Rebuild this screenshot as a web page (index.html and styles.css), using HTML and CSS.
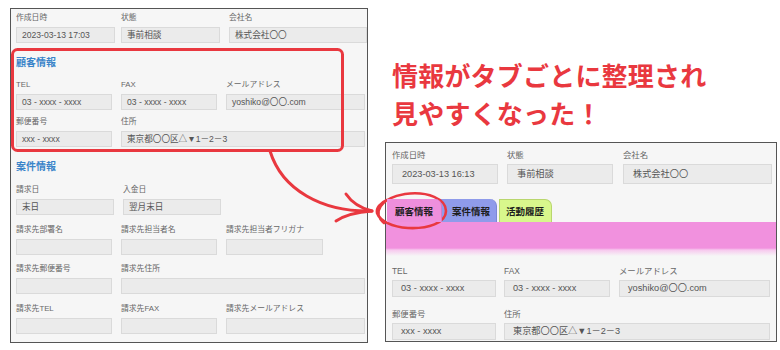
FILE: index.html
```html
<!DOCTYPE html>
<html lang="ja">
<head>
<meta charset="utf-8">
<title>タブ整理</title>
<link rel="stylesheet" href="styles.css">
</head>
<body>
<div class="page">
  <div class="panel panel-old">
    <div class="row row-top">
      <div class="field w99"><div class="lbl">作成日時</div><div class="inp">2023-03-13 17:03</div></div>
      <div class="field w99"><div class="lbl">状態</div><div class="inp">事前相談</div></div>
      <div class="field grow ml3"><div class="lbl">会社名</div><div class="inp">株式会社〇〇</div></div>
    </div>

    <div class="sec sec-first">顧客情報</div>
    <div class="row">
      <div class="field w96"><div class="lbl">TEL</div><div class="inp">03 - xxxx - xxxx</div></div>
      <div class="field w96"><div class="lbl">FAX</div><div class="inp">03 - xxxx - xxxx</div></div>
      <div class="field grow"><div class="lbl">メールアドレス</div><div class="inp">yoshiko@〇〇.com</div></div>
    </div>
    <div class="row gap6">
      <div class="field w96"><div class="lbl">郵便番号</div><div class="inp">xxx - xxxx</div></div>
      <div class="field grow"><div class="lbl">住所</div><div class="inp">東京都〇〇区△▼1－2－3</div></div>
    </div>

    <div class="sec sec-second">案件情報</div>
    <div class="row">
      <div class="field w98"><div class="lbl">請求日</div><div class="inp">末日</div></div>
      <div class="field w98"><div class="lbl">入金日</div><div class="inp">翌月末日</div></div>
    </div>
    <div class="row gap9">
      <div class="field w96"><div class="lbl">請求先部署名</div><div class="inp"></div></div>
      <div class="field w96"><div class="lbl">請求先担当者名</div><div class="inp"></div></div>
      <div class="field w97"><div class="lbl">請求先担当者フリガナ</div><div class="inp"></div></div>
    </div>
    <div class="row gap8">
      <div class="field w96"><div class="lbl">請求先郵便番号</div><div class="inp"></div></div>
      <div class="field grow"><div class="lbl">請求先住所</div><div class="inp"></div></div>
    </div>
    <div class="row gap9">
      <div class="field w96"><div class="lbl">請求先TEL</div><div class="inp"></div></div>
      <div class="field w96"><div class="lbl">請求先FAX</div><div class="inp"></div></div>
      <div class="field grow"><div class="lbl">請求先メールアドレス</div><div class="inp"></div></div>
    </div>
  </div>

  <div class="right">
    <p class="headline">情報がタブごとに整理され<br>見やすくなった！</p>
    <div class="panel panel-new">
      <div class="nrow nrow-top">
        <div class="nfield w106"><div class="nlbl">作成日時</div><div class="ninp tall">2023-03-13 16:13</div></div>
        <div class="nfield w106"><div class="nlbl">状態</div><div class="ninp tall">事前相談</div></div>
        <div class="nfield grow ml1"><div class="nlbl">会社名</div><div class="ninp tall">株式会社〇〇</div></div>
      </div>
      <div class="tabs">
        <div class="tab tab-pink">顧客情報</div>
        <div class="tab tab-blue">案件情報</div>
        <div class="tab tab-green">活動履歴</div>
      </div>
      <div class="band"></div>
      <div class="nrow nrow-tel">
        <div class="nfield w104"><div class="nlbl">TEL</div><div class="ninp">03 - xxxx - xxxx</div></div>
        <div class="nfield w106"><div class="nlbl">FAX</div><div class="ninp">03 - xxxx - xxxx</div></div>
        <div class="nfield grow ml1"><div class="nlbl">メールアドレス</div><div class="ninp">yoshiko@〇〇.com</div></div>
      </div>
      <div class="nrow nrow-addr">
        <div class="nfield w104"><div class="nlbl">郵便番号</div><div class="ninp">xxx - xxxx</div></div>
        <div class="nfield grow"><div class="nlbl">住所</div><div class="ninp">東京都〇〇区△▼1－2－3</div></div>
      </div>
    </div>
  </div>

  <svg class="marks" width="780" height="350" viewBox="0 0 780 350" aria-hidden="true">
    <rect x="12.5" y="49.5" width="330" height="101" rx="5" ry="5" fill="none" stroke="#e9383f" stroke-width="3"/>
    <path d="M270 151 C 282 190, 322 212, 371 211" fill="none" stroke="#e9383f" stroke-width="3" stroke-linecap="round"/>
    <path d="M346 194 C 352 203, 360 208, 372 211" fill="none" stroke="#e9383f" stroke-width="3" stroke-linecap="round"/>
    <path d="M372 211 C 358 212, 345 215, 336 221" fill="none" stroke="#e9383f" stroke-width="3" stroke-linecap="round"/>
    <path d="M384 223 C 372 213, 380 198, 405 194 C 428 191, 446 199, 446 211 C 446 223, 428 229, 408 228 C 392 227, 380 221, 377 213 C 376 208, 380 203, 387 200" fill="none" stroke="#e9383f" stroke-width="2.6" stroke-linecap="round"/>
  </svg>
</div>
</body>
</html>
```
FILE: styles.css
```css
* { box-sizing: border-box; }
html, body { margin: 0; padding: 0; background: #ffffff; }
body { width: 780px; height: 350px; overflow: hidden; font-family: "Liberation Sans", "Noto Sans CJK JP", sans-serif; }

.page {
  position: relative;
  display: flex;
  align-items: flex-start;
  gap: 17px;
  width: 780px;
  height: 350px;
  padding: 8px 0 0 10px;
}

.panel {
  background: #f6f6f6;
  border: 1px solid #555555;
  overflow: hidden;
}

/* old (left) form */
.panel-old {
  width: 358px;
  height: 335px;
  flex: none;
  padding: 3px 0 0 5px;
}
.row { display: flex; gap: 9px; padding-right: 2px; }
.row-top { gap: 6px; padding-right: 0; }
.gap6 { margin-top: 6px; }
.gap8 { margin-top: 8px; }
.gap9 { margin-top: 9px; }
.field, .nfield { flex: none; min-width: 0; }
.field.grow, .nfield.grow { flex: 1 1 auto; }
.ml3 { margin-left: 3px; }
.ml1 { margin-left: 1px; }
.w96 { width: 96px; }
.w97 { width: 97px; }
.w98 { width: 98px; }
.w99 { width: 99px; }
.w104 { width: 104px; }
.w106 { width: 106px; }

.lbl {
  height: 12px;
  line-height: 12px;
  font-size: 7.8px;
  color: #666666;
  margin-bottom: 3px;
  white-space: nowrap;
}
.inp {
  height: 16px;
  line-height: 14px;
  font-size: 8.6px;
  color: #555555;
  background: #ebebeb;
  border: 1px solid #dadada;
  padding-left: 5px;
  white-space: nowrap;
  overflow: hidden;
}
.sec {
  height: 14px;
  line-height: 14px;
  font-size: 10px;
  font-weight: 700;
  color: #3a84c9;
  font-family: "Noto Sans CJK JP", sans-serif;
}
.sec-first { margin: 12px 0 10px; }
.sec-second { margin: 12px 0 11px; }

/* right column */
.right { display: flex; flex-direction: column; flex: none; width: 395px; }
.headline {
  margin: 0;
  padding: 48px 0 0 7px;
  font-family: "Noto Sans CJK JP", sans-serif;
  font-weight: 700;
  font-size: 26px;
  line-height: 38px;
  color: #e9383f;
  letter-spacing: 0.2px;
  white-space: nowrap;
}
.panel-new {
  margin-top: 10px;
  width: 392px;
  height: 200px;
  padding: 6px 0 0 6px;
}
.nrow { display: flex; gap: 9px; padding-right: 4px; }
.nrow-tel { margin-top: 9px; gap: 8px; padding-right: 6px; }
.nrow-addr { margin-top: 11px; gap: 8px; padding-right: 6px; }
.nlbl {
  height: 12px;
  line-height: 12px;
  font-size: 8.4px;
  color: #666666;
  margin-bottom: 3px;
  white-space: nowrap;
}
.ninp {
  height: 17px;
  line-height: 15px;
  font-size: 9.2px;
  color: #555555;
  background: #ebebeb;
  border: 1px solid #dadada;
  padding-left: 8px;
  white-space: nowrap;
  overflow: hidden;
}
.ninp.tall { height: 20px; line-height: 18px; padding-left: 9px; }

.tabs { display: flex; margin: 15px 0 0 -5px; height: 23px; align-items: flex-end; }
.tab {
  height: 23px;
  line-height: 24px;
  font-family: "Noto Sans CJK JP", sans-serif;
  font-size: 9.5px;
  font-weight: 700;
  color: #1c1c1c;
  border-radius: 0 7px 0 0;
  white-space: nowrap;
}
.tab-pink {
  position: relative;
  z-index: 2;
  width: 55px;
  padding-left: 8px;
  background: #ee8fdc;
  border-right: 1px solid #d77cc6;
}
.tab-blue {
  width: 61px;
  margin-left: -6px;
  padding-left: 16px;
  background: #8f9bea;
  border-right: 1px solid #7c87d6;
}
.tab-green {
  width: 53px;
  margin-left: 2px;
  padding-left: 6px;
  background: #d8f78c;
  border: 1px solid #b9d66e;
  border-bottom: none;
  line-height: 22px;
}
.band {
  margin-left: -6px;
  height: 34px;
  background: linear-gradient(to bottom, #f191de 0, #f191de 26px, #f7c9ee 28px, #f6f6f6 34px);
}

.marks { position: absolute; left: 0; top: 0; pointer-events: none; }
```
